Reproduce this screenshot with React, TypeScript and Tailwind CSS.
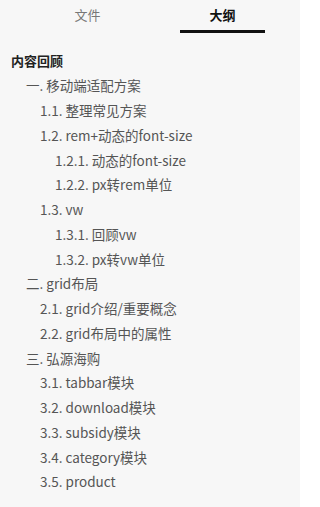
import React from 'react';

type Item = { text: string; level: number };

const items: Item[] = [
  { text: '一. 移动端适配方案', level: 1 },
  { text: '1.1. 整理常见方案', level: 2 },
  { text: '1.2. rem+动态的font-size', level: 2 },
  { text: '1.2.1. 动态的font-size', level: 3 },
  { text: '1.2.2. px转rem单位', level: 3 },
  { text: '1.3. vw', level: 2 },
  { text: '1.3.1. 回顾vw', level: 3 },
  { text: '1.3.2. px转vw单位', level: 3 },
  { text: '二. grid布局', level: 1 },
  { text: '2.1. grid介绍/重要概念', level: 2 },
  { text: '2.2. grid布局中的属性', level: 2 },
  { text: '三. 弘源海购', level: 1 },
  { text: '3.1. tabbar模块', level: 2 },
  { text: '3.2. download模块', level: 2 },
  { text: '3.3. subsidy模块', level: 2 },
  { text: '3.4. category模块', level: 2 },
  { text: '3.5. product', level: 2 },
];

const indent: Record<number, string> = {
  1: 'pl-[26px]',
  2: 'pl-[40px]',
  3: 'pl-[55px]',
};

const App = () => {
  return (
    <div
      className="w-[300px] h-[507px] bg-[#f7f7f7] overflow-hidden"
      style={{ fontFamily: '"Noto Sans CJK SC", "Noto Sans", sans-serif' }}
    >
      <div className="flex pl-[20px] h-[34px]">
        <div className="w-[135px] flex items-start justify-center pt-[5px] text-[13px] text-[#777] leading-[19px]">
          文件
        </div>
        <div className="w-[135px] flex flex-col items-center pt-[5px]">
          <span className="text-[13px] font-bold text-[#111] leading-[19px]">大纲</span>
          <div className="w-[85px] h-[3px] bg-[#111] mt-[6px]"></div>
        </div>
      </div>

      <div className="pt-[14px]">
        <div className="pl-[11px] h-[25px] flex items-center text-[13px] font-bold text-[#222]">
          内容回顾
        </div>
        {items.map((item) => (
          <div
            key={item.text}
            className={`${indent[item.level]} h-[24.75px] flex items-center text-[13.5px] text-[#555] whitespace-nowrap`}
          >
            {item.text}
          </div>
        ))}
      </div>
    </div>
  );
};

export default App;
